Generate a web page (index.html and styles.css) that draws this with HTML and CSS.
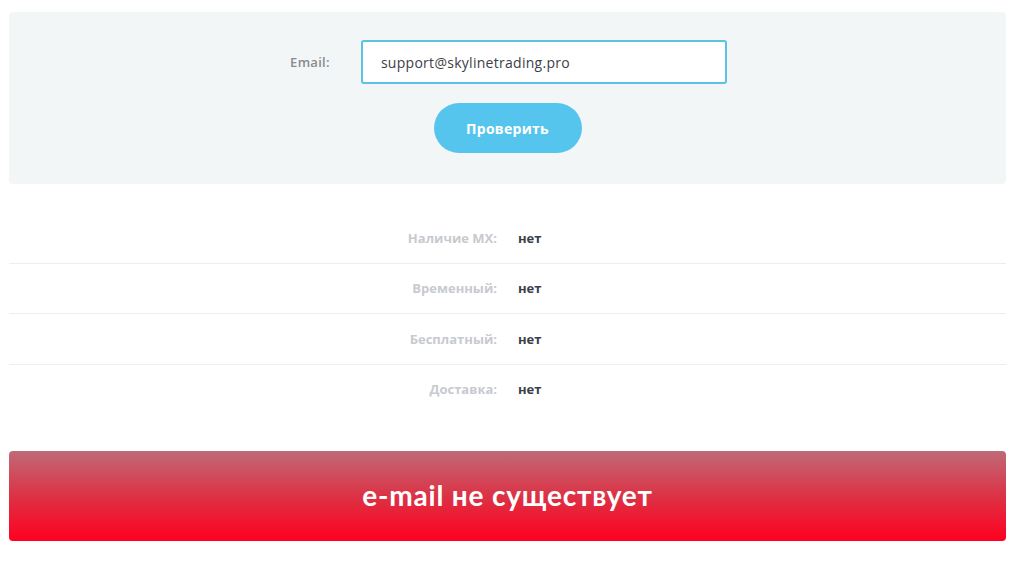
FILE: index.html
```html
<!DOCTYPE html>
<html lang="ru">
<head>
<meta charset="utf-8">
<title>Проверка email</title>
<link rel="stylesheet" href="styles.css">
</head>
<body>
<div class="page">
  <form class="panel">
    <div class="field">
      <label class="field-label" for="email">Email:</label>
      <input class="field-input" id="email" type="text" value="support@skylinetrading.pro">
    </div>
    <button class="btn" type="button">Проверить</button>
  </form>
  <div class="results">
    <div class="row"><span class="row-label">Наличие MX:</span><span class="row-value">нет</span></div>
    <div class="row"><span class="row-label">Временный:</span><span class="row-value">нет</span></div>
    <div class="row"><span class="row-label">Бесплатный:</span><span class="row-value">нет</span></div>
    <div class="row"><span class="row-label">Доставка:</span><span class="row-value">нет</span></div>
  </div>
  <div class="alert">e-mail не существует</div>
</div>
</body>
</html>
```
FILE: styles.css
```css
html, body {
  margin: 0;
  padding: 0;
  background: #ffffff;
  font-family: "Open Sans", "Noto Sans", sans-serif;
}
.page {
  width: 997px;
  margin-left: 9px;
  padding-top: 12px;
}
.panel {
  margin: 0;
  background: #f3f6f7;
  border-radius: 4px;
  padding: 28px 0 31px;
  display: flex;
  flex-direction: column;
  align-items: center;
  gap: 19px;
}
.field {
  display: flex;
  align-items: center;
  gap: 31px;
  margin-left: 2px;
}
.field-label {
  font-size: 13px;
  font-weight: 600;
  letter-spacing: 0.3px;
  color: #8a8b8d;
}
.field-input {
  box-sizing: border-box;
  width: 366px;
  height: 44px;
  border: 2px solid #5cc1e3;
  border-radius: 3px;
  background: #ffffff;
  padding: 0 18px;
  font-family: inherit;
  font-size: 14px;
  font-weight: 500;
  letter-spacing: 0.28px;
  color: #3d4047;
  outline: none;
}
.btn {
  width: 148px;
  height: 50px;
  border: none;
  border-radius: 25px;
  background: #56c5ed;
  color: #ffffff;
  font-family: inherit;
  font-size: 14px;
  font-weight: 700;
  letter-spacing: 0.3px;
  cursor: pointer;
}
.results {
  margin-top: 29px;
}
.row {
  display: grid;
  grid-template-columns: 1fr 1fr;
  column-gap: 21px;
  align-items: center;
  height: 49.5px;
  border-bottom: 1px solid #eceef0;
  font-size: 13px;
  font-weight: 700;
}
.row:last-child {
  border-bottom: none;
}
.row-label {
  text-align: right;
  color: #c7cacf;
}
.row-value {
  color: #3a3e48;
}
.alert {
  margin-top: 37px;
  height: 90px;
  border-radius: 4px;
  background: linear-gradient(to bottom, #bf6a77 0%, #dc3245 50%, #ff0020 100%);
  color: #ffffff;
  display: flex;
  align-items: center;
  justify-content: center;
  padding-bottom: 2px;
  box-sizing: border-box;
  font-family: Lato, "Open Sans", sans-serif;
  font-size: 28px;
  font-weight: 700;
  letter-spacing: 0.8px;
}
```
